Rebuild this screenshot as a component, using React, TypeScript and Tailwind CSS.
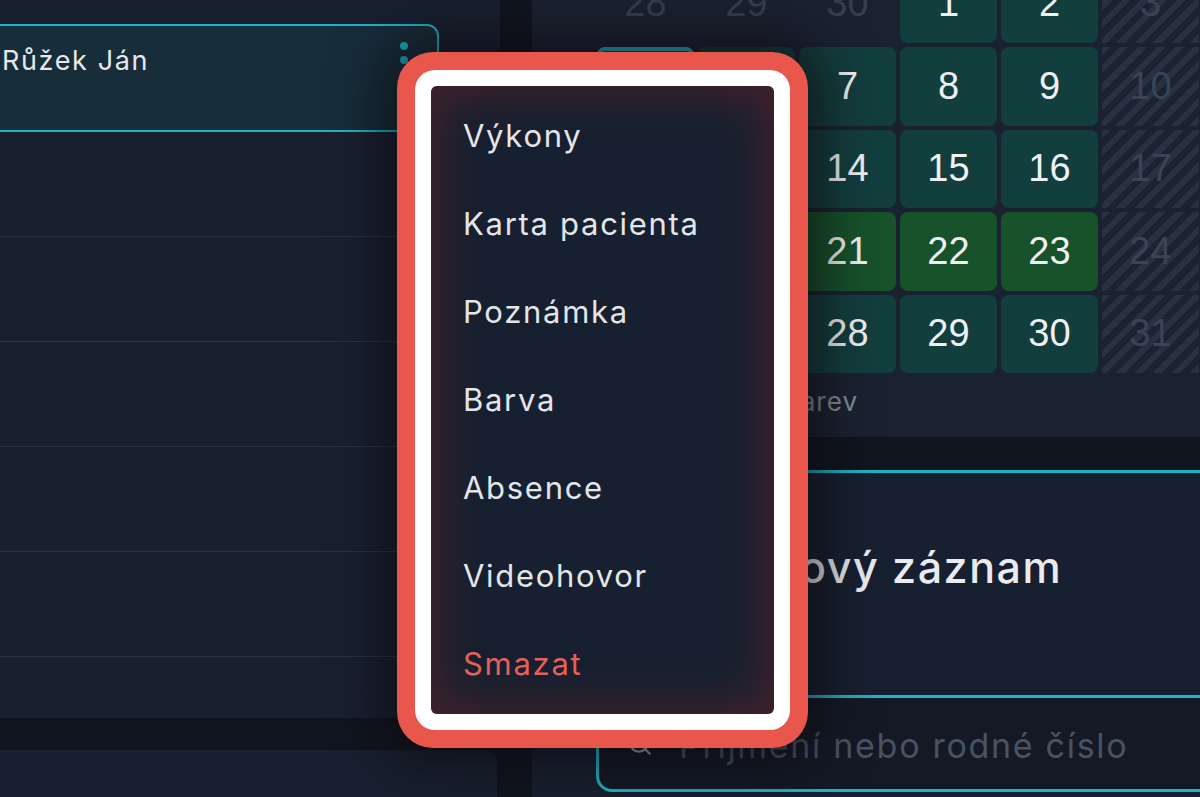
import { Search } from "lucide-react";

type DayKind = "prev" | "teal" | "today" | "green" | "hatch";

const DAY_CLASS: Record<DayKind, string> = {
  prev: "text-[#363f4f]",
  teal: "rounded-[8px] bg-[#133e3e] text-[#eef0f2]",
  today: "rounded-[8px] border-[4px] border-[#1db5c4] bg-[#133e3e] text-[#eef0f2]",
  green: "rounded-[8px] bg-[#17522b] text-[#eef0f2]",
  hatch:
    "bg-[repeating-linear-gradient(135deg,#283141_0_6px,#1b2332_6px_13px)] text-[#3b4455]",
};

const WEEKS: [number, DayKind][][] = [
  [[28, "prev"], [29, "prev"], [30, "prev"], [1, "teal"], [2, "teal"], [3, "hatch"], [4, "hatch"]],
  [[5, "today"], [6, "teal"], [7, "teal"], [8, "teal"], [9, "teal"], [10, "hatch"], [11, "hatch"]],
  [[12, "teal"], [13, "teal"], [14, "teal"], [15, "teal"], [16, "teal"], [17, "hatch"], [18, "hatch"]],
  [[19, "teal"], [20, "green"], [21, "green"], [22, "green"], [23, "green"], [24, "hatch"], [25, "hatch"]],
  [[26, "teal"], [27, "teal"], [28, "teal"], [29, "teal"], [30, "teal"], [31, "hatch"], [1, "hatch"]],
];

const MENU = ["Výkony", "Karta pacienta", "Poznámka", "Barva", "Absence", "Videohovor"];

function PatientList() {
  return (
    <div className="flex w-[500px] flex-col">
      <div className="h-[718px] bg-[#182030] pt-[24px]">
        <div className="relative h-[108px] w-[439px] rounded-r-[12px] border-y-2 border-r-2 border-[#1db5c4] bg-[#172d3a] pl-[2px] pt-[19px]">
          <span className="text-[27px] leading-[32px] tracking-[0.06em] text-[#e6e8eb]">Růžek Ján</span>
          <div className="absolute right-[29px] top-[16px] flex flex-col gap-[6px]">
            <span className="h-[8px] w-[8px] rounded-full bg-[#1db5c4]" />
            <span className="h-[8px] w-[8px] rounded-full bg-[#1db5c4]" />
            <span className="h-[8px] w-[8px] rounded-full bg-[#1db5c4]" />
          </div>
        </div>
        {[0, 1, 2, 3, 4].map((i) => (
          <div key={i} className="h-[105px] w-[439px] border-b border-[#2b3444]" />
        ))}
      </div>
      <div className="h-[32px]" />
      <div className="w-[497px] flex-1 rounded-tr-[14px] bg-[#172030]" />
    </div>
  );
}

function Calendar() {
  return (
    <div className="h-[437px] overflow-hidden bg-[#1a2231] pl-[65px]">
      <div className="-mt-[35.5px] grid grid-cols-[repeat(7,97px)] grid-rows-[repeat(5,78.5px)] gap-[4px] font-[Liberation_Sans,Arial,sans-serif] text-[38px]">
        {WEEKS.flat().map(([day, kind], i) => (
          <div key={i} className={`flex items-center justify-center ${DAY_CLASS[kind]}`}>
            {day}
          </div>
        ))}
      </div>
      <div className="ml-[64px] mt-[14px] text-[26px] leading-[30px] tracking-[0.04em] text-[#878e99]">
        Legenda barev
      </div>
    </div>
  );
}

function NewRecord() {
  return (
    <div className="flex-1 border-t-[3px] border-[#1db5c4] bg-[#172030] pt-[69px]">
      <div className="pl-[234px] text-[43px] font-medium leading-[50px] tracking-[0.035em] text-[#e9ebee]">
        Nový záznam
      </div>
      <div className="ml-[64px] mt-[103px] flex h-[97px] w-[720px] items-center gap-[26px] rounded-[16px] border-[3px] border-[#1db5c4] bg-[#131a26] pl-[28px]">
        <Search size={26} strokeWidth={2.2} className="text-[#9aa1ab]" />
        <span className="pt-[3px] text-[34px] tracking-[0.05em] text-[#4a5262]">Příjmení nebo rodné číslo</span>
      </div>
    </div>
  );
}

function ContextMenu() {
  return (
    <div className="absolute left-[397px] top-[52px] h-[696px] w-[411px] rounded-[36px] bg-[#e9564b] p-[18px] shadow-[0_0_50px_18px_rgba(14,8,14,0.6)]">
      <div className="h-full rounded-[20px] bg-white p-[16px]">
        <div className="h-full rounded-[6px] bg-[#172030] py-[6px] shadow-[inset_0_0_44px_10px_rgba(95,34,40,0.6)]">
          {MENU.map((label) => (
            <div
              key={label}
              className="flex h-[88px] items-center px-[32px] text-[31px] tracking-[0.055em] text-[#e3e5e9]"
            >
              {label}
            </div>
          ))}
          <div className="flex h-[88px] items-center px-[32px] text-[31px] tracking-[0.055em] text-[#e5605a]">
            Smazat
          </div>
        </div>
      </div>
    </div>
  );
}

export default function App() {
  return (
    <div className="relative flex h-[797px] w-[1200px] overflow-hidden bg-[#10151f] font-[Inter,sans-serif]">
      <PatientList />
      <div className="w-[32px]" />
      <div className="flex w-[668px] flex-col">
        <Calendar />
        <div className="h-[33px]" />
        <NewRecord />
      </div>
      <ContextMenu />
    </div>
  );
}
